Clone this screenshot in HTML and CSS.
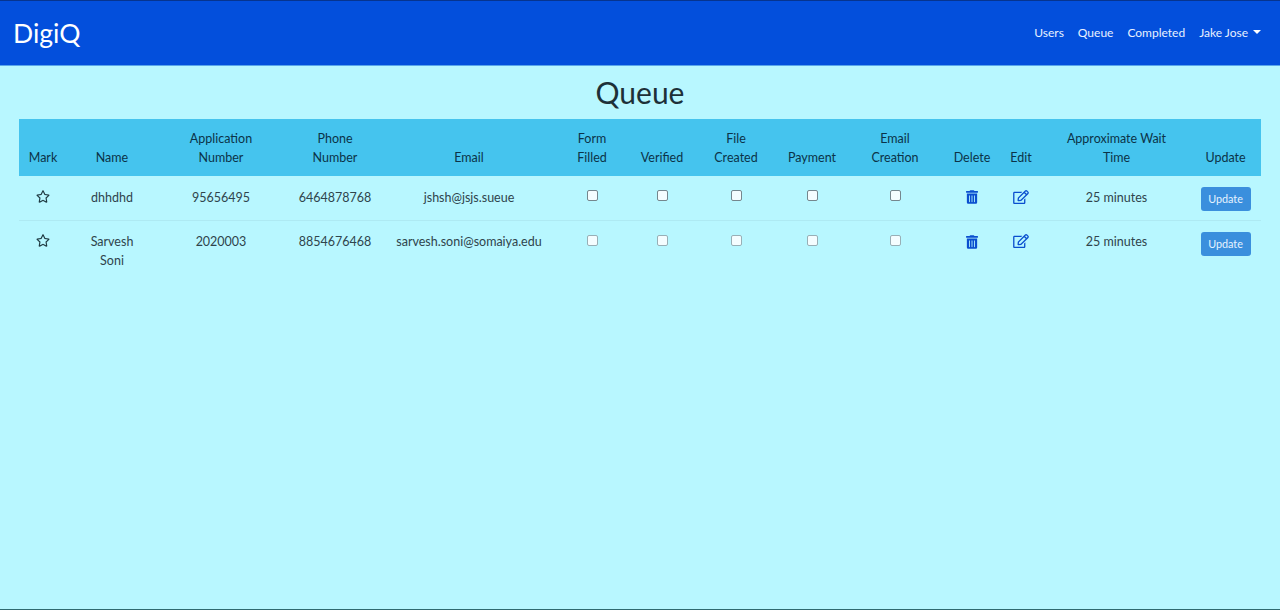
FILE: index.html
```html
<!DOCTYPE html>
<html>
<head>
	<meta charset="utf-8">
	<title>Queue</title>
	<link rel="stylesheet" href="styles.css">
</head>
<body>
	<svg class="sprites" width="0" height="0">
		<symbol id="star" viewBox="0 0 576 512"><path d="M528.1 171.5L382 150.2 316.7 17.8c-11.7-23.6-45.6-23.9-57.4 0L194 150.2 47.9 171.5c-26.2 3.8-36.7 36.1-17.7 54.6l105.7 103-25 145.5c-4.5 26.3 23.2 46 46.4 33.7L288 439.6l130.7 68.7c23.2 12.2 50.9-7.4 46.4-33.7l-25-145.5 105.7-103c19-18.5 8.5-50.8-17.7-54.6zM388.6 312.3l23.7 138.4L288 385.4l-124.3 65.3 23.7-138.4-100.6-98 139-20.2 62.2-126 62.2 126 139 20.2-100.6 98z"/></symbol>
		<symbol id="trash" viewBox="0 0 448 512"><path d="M32 464a48 48 0 0 0 48 48h288a48 48 0 0 0 48-48V128H32zm272-256a16 16 0 0 1 32 0v224a16 16 0 0 1-32 0zm-96 0a16 16 0 0 1 32 0v224a16 16 0 0 1-32 0zm-96 0a16 16 0 0 1 32 0v224a16 16 0 0 1-32 0zM432 32H312l-9.4-18.7A24 24 0 0 0 281.1 0H166.8a23.72 23.72 0 0 0-21.4 13.3L136 32H16A16 16 0 0 0 0 48v32a16 16 0 0 0 16 16h416a16 16 0 0 0 16-16V48a16 16 0 0 0-16-16z"/></symbol>
		<symbol id="edit" viewBox="0 0 576 512"><path d="M402.3 344.9l32-32c5-5 13.7-1.5 13.7 5.7V464c0 26.5-21.5 48-48 48H48c-26.5 0-48-21.5-48-48V112c0-26.5 21.5-48 48-48h273.5c7.1 0 10.7 8.6 5.7 13.7l-32 32c-1.5 1.5-3.5 2.3-5.7 2.3H48v352h352V350.5c0-2.1.8-4.1 2.3-5.6zm156.6-201.8L296.3 405.7l-90.4 10c-26.2 2.9-48.5-19.2-45.6-45.6l10-90.4L432.9 17.1c22.9-22.9 59.9-22.9 82.7 0l43.2 43.2c22.9 22.9 22.9 60 .1 82.8zM460.1 174L402 115.9 216.2 301.8l-7.3 65.3 65.3-7.3L460.1 174zm64.8-79.7l-43.2-43.2c-4.1-4.1-10.8-4.1-14.8 0L436 82l58.1 58.1 30.9-30.9c4-4.2 4-10.8-.1-14.9z"/></symbol>
	</svg>

	<nav class="navbar">
		<a class="brand" href="#">DigiQ</a>
		<ul class="nav-links">
			<li><a href="#">Users</a></li>
			<li><a href="#">Queue</a></li>
			<li><a href="#">Completed</a></li>
			<li><a class="dropdown" href="#">Jake Jose</a></li>
		</ul>
	</nav>

	<main class="content">
		<h1 class="title">Queue</h1>
		<table class="queue">
			<colgroup>
				<col class="c-mark"><col class="c-name"><col class="c-app"><col class="c-phone"><col class="c-email">
				<col class="c-form"><col class="c-verified"><col class="c-file"><col class="c-payment"><col class="c-creation">
				<col class="c-delete"><col class="c-edit"><col class="c-wait"><col class="c-update">
			</colgroup>
			<thead>
				<tr>
					<th>Mark</th>
					<th>Name</th>
					<th>Application<br>Number</th>
					<th>Phone<br>Number</th>
					<th>Email</th>
					<th>Form<br>Filled</th>
					<th>Verified</th>
					<th>File<br>Created</th>
					<th>Payment</th>
					<th>Email<br>Creation</th>
					<th>Delete</th>
					<th>Edit</th>
					<th>Approximate Wait<br>Time</th>
					<th>Update</th>
				</tr>
			</thead>
			<tbody>
				<tr>
					<td><svg class="icon star"><use href="#star"/></svg></td>
					<td>dhhdhd</td>
					<td>95656495</td>
					<td>6464878768</td>
					<td>jshsh@jsjs.sueue</td>
					<td><input type="checkbox"></td>
					<td><input type="checkbox"></td>
					<td><input type="checkbox"></td>
					<td><input type="checkbox"></td>
					<td><input type="checkbox"></td>
					<td><svg class="icon trash"><use href="#trash"/></svg></td>
					<td><svg class="icon edit"><use href="#edit"/></svg></td>
					<td>25 minutes</td>
					<td><button class="btn-update">Update</button></td>
				</tr>
				<tr>
					<td><svg class="icon star"><use href="#star"/></svg></td>
					<td>Sarvesh<br>Soni</td>
					<td>2020003</td>
					<td>8854676468</td>
					<td>sarvesh.soni@somaiya.edu</td>
					<td><input type="checkbox"></td>
					<td><input type="checkbox"></td>
					<td><input type="checkbox"></td>
					<td><input type="checkbox"></td>
					<td><input type="checkbox"></td>
					<td><svg class="icon trash"><use href="#trash"/></svg></td>
					<td><svg class="icon edit"><use href="#edit"/></svg></td>
					<td>25 minutes</td>
					<td><button class="btn-update">Update</button></td>
				</tr>
			</tbody>
		</table>
	</main>
</body>
</html>
```

FILE: styles.css
```css
*{
	box-sizing: border-box;
}
html, body{
	height: 100%;
}
body{
	margin: 0;
	background: #b8f7ff;
	border-bottom: 1px solid #2f6a70;
	font-family: "Lato", "Open Sans", sans-serif;
	font-size: 12.5px;
	line-height: 19px;
	color: #2f444c;
}
.sprites{
	position: absolute;
}
.navbar{
	display: flex;
	align-items: center;
	justify-content: space-between;
	height: 66px;
	padding: 0 19px 1px 13px;
	background: #034fdc;
	border-top: 1px solid #06348f;
	border-bottom: 1px solid #5aa6ea;
}
.brand{
	color: #fff;
	font-size: 26.5px;
	line-height: 36px;
	text-decoration: none;
}
.nav-links{
	display: flex;
	gap: 14px;
	margin: 0;
	padding: 0;
	list-style: none;
	font-size: 12px;
}
.nav-links a{
	color: #e8f1ff;
	text-decoration: none;
}
.dropdown::after{
	content: "";
	display: inline-block;
	margin-left: 5px;
	vertical-align: 3px;
	border-top: 4px solid #fff;
	border-left: 4px solid transparent;
	border-right: 4px solid transparent;
}
.content{
	padding: 0 19px;
}
.title{
	margin: 8px 0 8px;
	font-size: 30px;
	line-height: 37px;
	font-weight: 400;
	text-align: center;
	color: #1d3038;
}
.queue{
	width: 100%;
	table-layout: fixed;
	border-collapse: collapse;
	text-align: center;
}
.c-mark{ width: 48px; }
.c-name{ width: 90px; }
.c-app{ width: 128px; }
.c-phone{ width: 100px; }
.c-email{ width: 168px; }
.c-form{ width: 78px; }
.c-verified{ width: 62px; }
.c-file{ width: 86px; }
.c-payment{ width: 66px; }
.c-creation{ width: 100px; }
.c-delete{ width: 54px; }
.c-edit{ width: 44px; }
.c-wait{ width: 147px; }
.c-update{ width: 71px; }
.queue th{
	padding: 10px 0 9px;
	background: #45c4ee;
	font-weight: 400;
	color: #0b3348;
	vertical-align: bottom;
}
.queue td{
	padding: 12px 0 9px;
	border-bottom: 1px solid #aeeaf3;
	vertical-align: top;
}
.queue tbody tr:last-child td{
	padding-top: 11px;
	border-bottom: 0;
}
.queue input{
	appearance: none;
	display: inline-block;
	width: 11px;
	height: 11px;
	margin: 2px 0 0;
	vertical-align: top;
	background: #f4fdff;
	border: 1px solid #75878e;
	border-radius: 2px;
}
.queue tbody tr:last-child input{
	margin-top: 3px;
	border-color: #98afb6;
}
.icon{
	display: inline-block;
	vertical-align: top;
	margin-top: 2px;
}
.star{
	width: 14px;
	height: 13px;
	fill: #1f3a42;
}
.trash{
	width: 12px;
	height: 14px;
	fill: #0a4fcf;
}
.queue tbody tr:last-child .trash{
	margin-top: 3px;
}
.edit{
	width: 18px;
	height: 14px;
	fill: #0a4fcf;
}
.btn-update{
	display: block;
	width: 50px;
	height: 24px;
	margin: -1px auto 0;
	padding: 0 0 2px;
	border: 0;
	border-radius: 3px;
	background: #3a8fdd;
	color: #e6f3ff;
	font-family: inherit;
	font-size: 10.8px;
}
.queue tbody tr:last-child .btn-update{
	margin-top: 0;
}
```
